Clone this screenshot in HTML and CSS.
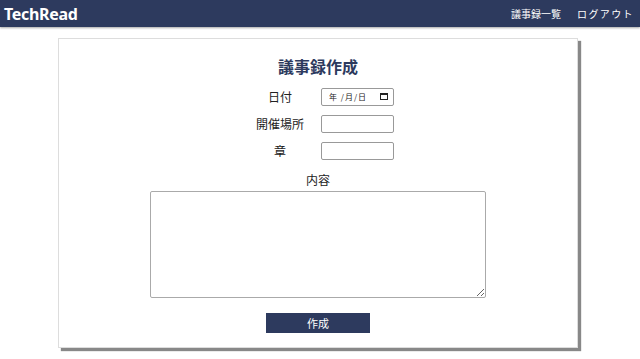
FILE: index.html
```html
<!DOCTYPE html>
<html lang="ja">
	<head>
		<meta charset="utf-8">
		<title>議事録作成</title>
		<link rel="stylesheet" href="styles.css">
	</head>
	<body>
		<header class="header">
			<div class="logo">TechRead</div>
			<nav class="nav">
				<a href="#">議事録一覧</a>
				<a href="#" class="logout">ログアウト</a>
			</nav>
		</header>

		<div class="card">
			<h2 class="title">議事録作成</h2>
			<form class="form">
				<table class="form-table">
					<tr>
						<th>日付</th>
						<td>
							<label class="input date-input">
								<input type="text" placeholder="年 /月/日" />
								<svg width="8" height="7" viewBox="0 0 8 7">
									<rect x="0.5" y="0.5" width="7" height="6" fill="none" stroke="#222" />
									<rect x="0" y="0" width="8" height="2" fill="#222" />
								</svg>
							</label>
						</td>
					</tr>
					<tr>
						<th>開催場所</th>
						<td><input type="text" class="input" /></td>
					</tr>
					<tr>
						<th>章</th>
						<td><input type="text" class="input" /></td>
					</tr>
				</table>
				<div class="content-label">内容</div>
				<textarea class="content"></textarea>
				<button type="button" class="submit">作成</button>
			</form>
		</div>
	</body>
</html>
```

FILE: styles.css
```css
body {
	margin: 0;
	padding: 0;
	font-family: "Noto Sans CJK JP", "Noto Sans", sans-serif;
	font-size: 12px;
	color: #222;
	background-color: #fff;
}

.header {
	display: flex;
	justify-content: space-between;
	align-items: center;
	height: 27px;
	padding: 0 6px 0 4px;
	background-color: #2d3a5e;
	box-shadow: 0 1px 2px rgba(0, 0, 0, 0.35);
}

.logo {
	color: #fff;
	font-family: "Noto Sans", sans-serif;
	font-size: 16px;
	font-weight: bold;
	letter-spacing: -0.3px;
}

.nav {
	display: flex;
	gap: 16px;
}

.nav a {
	color: #fff;
	text-decoration: none;
	font-size: 10px;
}

.nav .logout {
	letter-spacing: 1.4px;
}

.card {
	width: 518px;
	margin: 11px 0 10px 58px;
	padding: 15px 0 14px;
	border: 1px solid #ddd;
	box-shadow: 3px 3px 1px #888;
	text-align: center;
}

.title {
	margin: 0 0 5px;
	font-size: 16px;
	line-height: 24px;
	color: #2d3a5e;
}

.form-table {
	margin: 0 auto;
	border-spacing: 0;
}

.form-table th {
	width: 64px;
	height: 27px;
	padding: 0 0 0 10px;
	font-weight: normal;
	text-align: center;
}

.form-table td {
	padding: 0 4px 0 9px;
}

.input {
	display: block;
	box-sizing: border-box;
	width: 73px;
	height: 18px;
	padding: 0 3px;
	border: 1px solid #999;
	border-radius: 2px;
	font-size: 8px;
	font-family: inherit;
}

.date-input {
	display: flex;
	align-items: center;
	padding: 0 5px 0 7px;
}

.date-input input {
	flex: 1;
	min-width: 0;
	padding: 0;
	border: none;
	outline: none;
	font-size: 8px;
	letter-spacing: 1px;
	font-family: inherit;
	background: transparent;
}

.date-input input::placeholder {
	color: #222;
}

.content-label {
	margin-top: 7px;
	line-height: 18px;
}

.content {
	display: block;
	box-sizing: border-box;
	width: 336px;
	height: 107px;
	margin: 2px auto 0;
	border: 1px solid #aaa;
	border-radius: 2px;
}

.submit {
	display: block;
	width: 104px;
	height: 20px;
	margin: 15px auto 0;
	border: none;
	background-color: #2d3a5e;
	color: #fff;
	font-family: inherit;
	font-size: 11px;
}
```
